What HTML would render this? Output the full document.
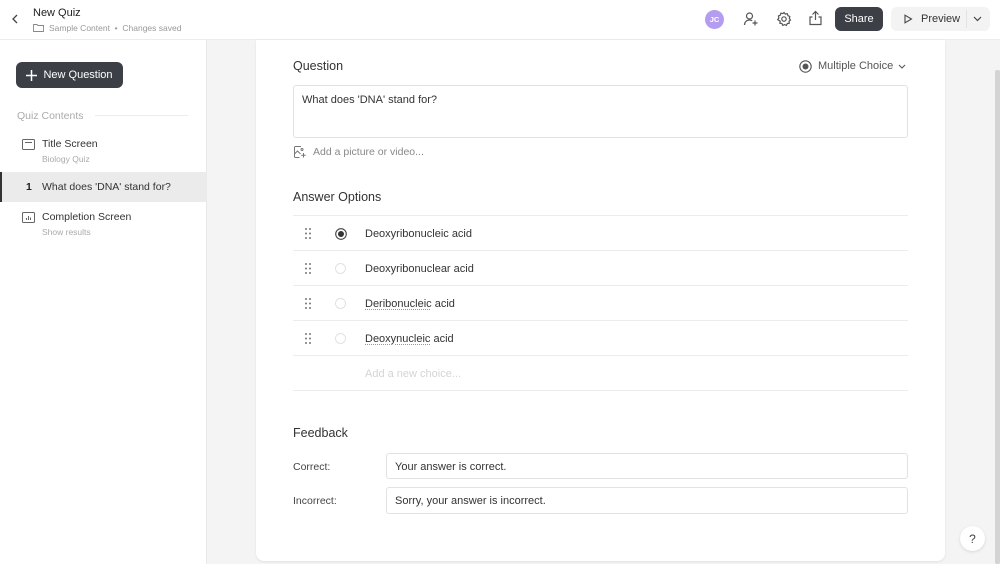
<!DOCTYPE html>
<html><head><meta charset="utf-8"><style>
*{box-sizing:border-box;margin:0;padding:0}
body{width:1000px;height:564px;overflow:hidden;font-family:"Liberation Sans",sans-serif;background:#f4f4f5;position:relative;color:#333}
.top{position:absolute;left:0;top:0;width:1000px;height:40px;background:#fff;border-bottom:1px solid #ececec}
.side{position:absolute;left:0;top:40px;width:207px;height:524px;background:#fff;border-right:1px solid #e8e8e8}
.card{position:absolute;left:256px;top:40px;width:689px;height:521px;background:#fff;border-radius:0 0 8px 8px;box-shadow:0 1px 2px rgba(0,0,0,.08)}
.abs{position:absolute}
.btn{position:absolute;border-radius:6px;font-size:11px;display:flex;align-items:center;justify-content:center}
.row{position:absolute;left:37px;width:615px;height:35px;border-top:1px solid #ececec;font-size:11px;color:#333}
.row .txt{position:absolute;left:72px;top:12px}
.row .dr{position:absolute;left:12px;top:12px}
.row .rd{position:absolute;left:42px;top:12px;width:11px;height:11px;border:1px solid #e2e2e2;border-radius:50%}
.sp{text-decoration:underline dotted #d77;text-underline-offset:2px}
.inp{position:absolute;border:1px solid #e2e2e2;border-radius:3px;font-size:11px;color:#333;padding:7px 8px}
</style></head><body>
<div class="top">
 <svg class="abs" style="left:11px;top:14px" width="8" height="10" viewBox="0 0 8 10"><path d="M6 1L2 5l4 4" stroke="#444" stroke-width="1.3" fill="none"/></svg>
 <div class="abs" style="left:33px;top:7px;font-size:11px;color:#222">New Quiz</div>
 <svg class="abs" style="left:33px;top:23px" width="11" height="9" viewBox="0 0 11 9"><path d="M.5 1.5h3.5l1 1h5.5v6h-10z" stroke="#888" fill="none" stroke-width=".9"/></svg>
 <div class="abs" style="left:49px;top:23px;font-size:8.5px;color:#999">Sample Content &nbsp;•&nbsp; Changes saved</div>
 <div class="abs" style="left:705px;top:10px;width:19px;height:19px;border-radius:50%;background:#b49cf0;color:#fff;font-size:7.5px;font-weight:bold;display:flex;align-items:center;justify-content:center">JC</div>
 <svg class="abs" style="left:743px;top:11px" width="16" height="16" viewBox="0 0 16 16" fill="none" stroke="#555" stroke-width="1.2"><circle cx="6.5" cy="5" r="3"/><path d="M1.5 14c0-3 2.2-5 5-5 1.2 0 2 .3 2.7.7M12 9.5v5M9.5 12h5"/></svg>
 <svg class="abs" style="left:776px;top:11px" width="16" height="16" viewBox="0 0 16 16" fill="none" stroke="#555" stroke-width="1.2"><circle cx="8" cy="8" r="2.2"/><path d="M8 1.5l1.3 1.6 2-.4.6 2 1.9.8-.5 2 1.2 1.5-1.5 1.2.3 2-2 .3-.9 1.9-1.8-.9-1.8.9-.9-1.9-2-.3.3-2L1.7 8.6 2.9 7l-.5-2 1.9-.8.6-2 2 .4z"/></svg>
 <svg class="abs" style="left:808px;top:10px" width="15" height="16" viewBox="0 0 15 16" fill="none" stroke="#555" stroke-width="1.2"><path d="M7.5 10V1.5M4.5 4.5l3-3 3 3M4.5 7H2v7.5h11V7h-2.5"/></svg>
 <div class="btn" style="left:835px;top:7px;width:48px;height:24px;background:#3c4046;color:#fff">Share</div>
 <div class="btn" style="left:891px;top:7px;width:99px;height:24px;background:#f3f3f4;color:#333;justify-content:flex-start;padding-left:12px">
  <svg width="10" height="10" viewBox="0 0 10 10"><path d="M2 1.2l6.5 3.8L2 8.8z" stroke="#444" fill="none" stroke-width="1.1"/></svg><span style="margin-left:8px">Preview</span>
  <span style="position:absolute;left:75px;top:3px;width:1px;height:18px;background:#e3e3e3"></span>
  <svg style="position:absolute;left:82px;top:9px" width="9" height="6" viewBox="0 0 9 6"><path d="M1 1l3.5 3.5L8 1" stroke="#444" fill="none" stroke-width="1.2"/></svg>
 </div>
</div>
<div class="side">
 <div class="btn" style="left:16px;top:22px;width:107px;height:26px;background:#3c4046;color:#fff;font-size:11px"><svg width="11" height="11" viewBox="0 0 11 11" style="margin-right:6px"><path d="M5.5 0v11M0 5.5h11" stroke="#fff" stroke-width="1.5"/></svg>New Question</div>
 <div class="abs" style="left:17px;top:70px;font-size:10.5px;color:#aaa">Quiz Contents</div>
 <div class="abs" style="left:95px;top:75px;width:93px;height:1px;background:#ececec"></div>
 <svg class="abs" style="left:22px;top:99px" width="13" height="11" viewBox="0 0 13 11" fill="none" stroke="#666" stroke-width="1"><rect x=".5" y=".5" width="12" height="10" rx="1"/><path d="M3 3.5h7"/></svg>
 <div class="abs" style="left:42px;top:98px;font-size:10.5px;color:#333">Title Screen</div>
 <div class="abs" style="left:42px;top:114px;font-size:8.5px;color:#aaa">Biology Quiz</div>
 <div class="abs" style="left:0;top:132px;width:207px;height:30px;background:#ebebec;border-left:2px solid #333"></div>
 <div class="abs" style="left:26px;top:141px;font-size:10.5px;color:#222;font-weight:bold">1</div>
 <div class="abs" style="left:42px;top:141px;font-size:10.5px;color:#333">What does 'DNA' stand for?</div>
 <svg class="abs" style="left:22px;top:172px" width="13" height="11" viewBox="0 0 13 11" fill="none" stroke="#666" stroke-width="1"><rect x=".5" y=".5" width="12" height="10" rx="1"/><path d="M4.5 8V6M6.5 8V4M8.5 8V5.5"/></svg>
 <div class="abs" style="left:42px;top:171px;font-size:10.5px;color:#333">Completion Screen</div>
 <div class="abs" style="left:42px;top:187px;font-size:8.5px;color:#aaa">Show results</div>
</div>
<div class="card">
 <div class="abs" style="left:37px;top:19px;font-size:12.5px;color:#333">Question</div>
 <svg class="abs" style="left:543px;top:20px" width="13" height="13" viewBox="0 0 13 13"><circle cx="6.5" cy="6.5" r="5.7" stroke="#555" fill="none" stroke-width="1.1"/><circle cx="6.5" cy="6.5" r="3" fill="#555"/></svg>
 <div class="abs" style="left:562px;top:20px;font-size:11px;color:#555">Multiple Choice</div>
 <svg class="abs" style="left:642px;top:24px" width="8" height="5" viewBox="0 0 8 5"><path d="M1 1l3 3 3-3" stroke="#555" fill="none" stroke-width="1.1"/></svg>
 <div class="inp" style="left:37px;top:45px;width:615px;height:53px;padding:8px 8px">What does 'DNA' stand for?</div>
 <svg class="abs" style="left:38px;top:106px" width="12" height="12" viewBox="0 0 12 12" fill="none" stroke="#777" stroke-width="1"><path d="M7 .5H1.5a1 1 0 0 0-1 1v9a1 1 0 0 0 1 1h4M.5 8l3-3 3 3"/><circle cx="8" cy="3.5" r="1"/><path d="M9.5 7v4.5M7.2 9.3h4.5"/></svg>
 <div class="abs" style="left:57px;top:106px;font-size:10.5px;color:#888">Add a picture or video...</div>
 <div class="abs" style="left:37px;top:150px;font-size:12.5px;color:#333">Answer Options</div>
 <div class="row" style="top:175px"><svg class="dr" width="6" height="11" viewBox="0 0 6 11" fill="#777"><circle cx="1" cy="1" r="1"/><circle cx="5" cy="1" r="1"/><circle cx="1" cy="5.5" r="1"/><circle cx="5" cy="5.5" r="1"/><circle cx="1" cy="10" r="1"/><circle cx="5" cy="10" r="1"/></svg><svg style="position:absolute;left:42px;top:12px" width="12" height="12" viewBox="0 0 12 12"><circle cx="6" cy="6" r="5.3" stroke="#444" fill="none" stroke-width="1.1"/><circle cx="6" cy="6" r="3" fill="#333"/></svg><span class="txt">Deoxyribonucleic acid</span></div>
 <div class="row" style="top:210px"><svg class="dr" width="6" height="11" viewBox="0 0 6 11" fill="#777"><circle cx="1" cy="1" r="1"/><circle cx="5" cy="1" r="1"/><circle cx="1" cy="5.5" r="1"/><circle cx="5" cy="5.5" r="1"/><circle cx="1" cy="10" r="1"/><circle cx="5" cy="10" r="1"/></svg><span class="rd"></span><span class="txt">Deoxyribonuclear acid</span></div>
 <div class="row" style="top:245px"><svg class="dr" width="6" height="11" viewBox="0 0 6 11" fill="#777"><circle cx="1" cy="1" r="1"/><circle cx="5" cy="1" r="1"/><circle cx="1" cy="5.5" r="1"/><circle cx="5" cy="5.5" r="1"/><circle cx="1" cy="10" r="1"/><circle cx="5" cy="10" r="1"/></svg><span class="rd"></span><span class="txt"><span class="sp">Deribonucleic</span> acid</span></div>
 <div class="row" style="top:280px"><svg class="dr" width="6" height="11" viewBox="0 0 6 11" fill="#777"><circle cx="1" cy="1" r="1"/><circle cx="5" cy="1" r="1"/><circle cx="1" cy="5.5" r="1"/><circle cx="5" cy="5.5" r="1"/><circle cx="1" cy="10" r="1"/><circle cx="5" cy="10" r="1"/></svg><span class="rd"></span><span class="txt"><span class="sp">Deoxynucleic</span> acid</span></div>
 <div class="row" style="top:315px;border-bottom:1px solid #ececec;height:36px"><span class="txt" style="color:#d4d4d4">Add a new choice...</span></div>
 <div class="abs" style="left:37px;top:386px;font-size:12.5px;color:#333">Feedback</div>
 <div class="abs" style="left:37px;top:421px;font-size:10.5px;color:#444">Correct:</div>
 <div class="inp" style="left:130px;top:413px;width:522px;height:26px">Your answer is correct.</div>
 <div class="abs" style="left:37px;top:455px;font-size:10.5px;color:#444">Incorrect:</div>
 <div class="inp" style="left:130px;top:447px;width:522px;height:27px">Sorry, your answer is incorrect.</div>
</div>
<div class="abs" style="left:995px;top:70px;width:5px;height:494px;background:#d4d4d4;border-radius:2px"></div>
<div class="abs" style="left:960px;top:526px;width:25px;height:25px;border-radius:50%;background:#fff;box-shadow:0 1px 3px rgba(0,0,0,.12);font-size:12px;color:#444;display:flex;align-items:center;justify-content:center">?</div>
</body></html>
